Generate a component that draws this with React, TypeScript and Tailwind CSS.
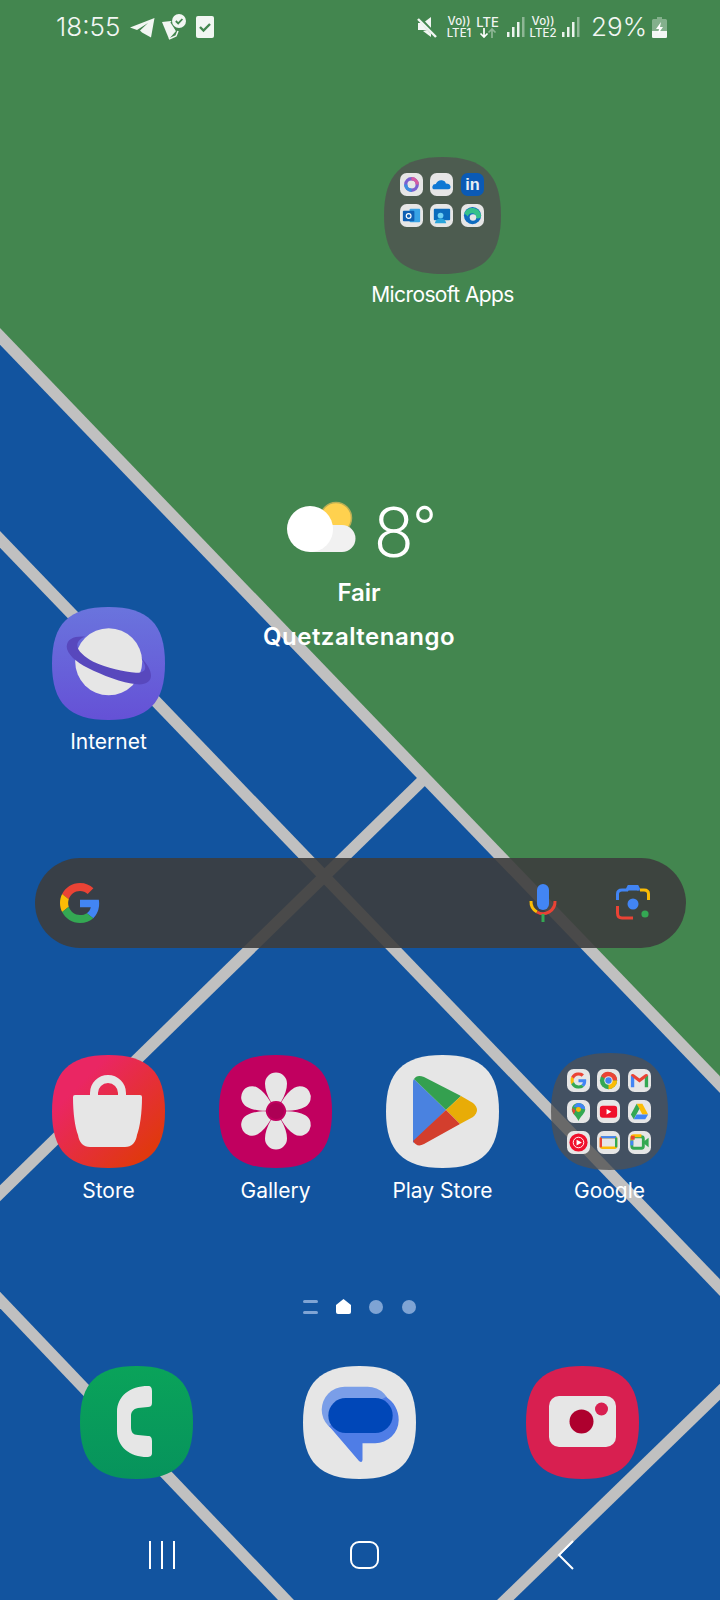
import type { ReactNode } from 'react';

const SQUIRCLE = 'M50 0C85 0 100 15 100 50C100 85 85 100 50 100C15 100 0 85 0 50C0 15 15 0 50 0Z';
const PETAL = 'M52 47C48 40 46 34 46 28.5A11 11 0 0 1 68 28.5C68 34 66 40 62 47Q57 45 52 47Z';

function Wallpaper() {
  return (
    <svg className="absolute inset-0" width="720" height="1600" viewBox="0 0 720 1600">
      <rect width="720" height="1600" fill="#12549f" />
      <polygon points="0,0 720,0 720,1085 0,336" fill="#43864f" />
      <g stroke="#c0c0c0" strokeWidth="11.5" fill="none">
        <line x1="-10" y1="326" x2="730" y2="1095" />
        <line x1="-10" y1="529" x2="730" y2="1298" />
        <line x1="-10" y1="1289.5" x2="300" y2="1614.7" />
        <line x1="425" y1="778" x2="-10" y2="1203" />
        <line x1="730" y1="1382" x2="495" y2="1610" />
      </g>
    </svg>
  );
}

function AppIcon({ bg, children }: { bg: string; children: ReactNode }) {
  return (
    <svg width="113" height="113" viewBox="0 0 113 113">
      <defs>
        <linearGradient id="storeBg" x1="0" y1="0" x2="1" y2="1">
          <stop offset="0.25" stopColor="#ea2663" />
          <stop offset="0.85" stopColor="#e0380f" />
        </linearGradient>
        <linearGradient id="netBg" x1="0" y1="0" x2="0" y2="1">
          <stop offset="0" stopColor="#6a74dd" />
          <stop offset="1" stopColor="#6551d6" />
        </linearGradient>
        <linearGradient id="phoneBg" x1="0" y1="0" x2="0" y2="1">
          <stop offset="0" stopColor="#0aa35a" />
          <stop offset="1" stopColor="#07935c" />
        </linearGradient>
      </defs>
      <path d={SQUIRCLE} transform="scale(1.13)" fill={bg} />
      {children}
    </svg>
  );
}

function GoogleG({ size }: { size: number }) {
  return (
    <svg width={size} height={size} viewBox="0 0 48 48">
      <path fill="#EA4335" d="M24 9.5c3.54 0 6.71 1.22 9.21 3.6l6.85-6.85C35.9 2.38 30.47 0 24 0 14.62 0 6.51 5.38 2.56 13.22l7.98 6.19C12.43 13.72 17.74 9.5 24 9.5z" />
      <path fill="#4285F4" d="M46.98 24.55c0-1.57-.15-3.09-.38-4.55H24v9.02h12.94c-.58 2.96-2.26 5.48-4.78 7.18l7.73 6c4.51-4.18 7.09-10.36 7.09-17.65z" />
      <path fill="#FBBC05" d="M10.53 28.59c-.48-1.45-.76-2.99-.76-4.59s.27-3.14.76-4.59l-7.98-6.19C.92 16.46 0 20.12 0 24c0 3.88.92 7.54 2.56 10.78l7.97-6.19z" />
      <path fill="#34A853" d="M24 48c6.48 0 11.93-2.13 15.89-5.81l-7.73-6c-2.15 1.45-4.92 2.3-8.16 2.3-6.26 0-11.57-4.22-13.47-9.91l-7.98 6.19C6.51 42.62 14.62 48 24 48z" />
    </svg>
  );
}

function Mini({ bg = '#e6e6e6', children }: { bg?: string; children: ReactNode }) {
  return (
    <svg width="23" height="23" viewBox="0 0 24 24">
      <rect width="24" height="24" rx="7" fill={bg} />
      {children}
    </svg>
  );
}

function Folder({ bg, children }: { bg: string; children: ReactNode }) {
  return (
    <div className="relative h-[117px] w-[117px]">
      <svg className="absolute inset-0" width="117" height="117" viewBox="0 0 100 100">
        <path d={SQUIRCLE} fill={bg} />
      </svg>
      <div className="relative grid grid-cols-[repeat(3,23px)] gap-x-[7.5px] gap-y-[8px] pl-[15.5px] pt-[16px]">{children}</div>
    </div>
  );
}

function Cell({ label, children, className = '', labelClass = 'mt-[7px]' }: { label?: string; children: ReactNode; className?: string; labelClass?: string }) {
  return (
    <div className={`flex flex-col items-center ${className}`}>
      <div className="flex h-[117px] w-[117px] items-center justify-center">{children}</div>
      {label && <div className={`text-[21px] leading-[28px] whitespace-nowrap text-white ${labelClass}`}>{label}</div>}
    </div>
  );
}

function Signal() {
  return (
    <svg width="18" height="21" viewBox="0 0 18 21">
      <rect x="0" y="15" width="2.5" height="5" fill="#fff" fillOpacity="0.9" />
      <rect x="5" y="10" width="2.5" height="10" fill="#fff" fillOpacity="0.9" />
      <rect x="10" y="5" width="2.5" height="15" fill="#fff" fillOpacity="0.9" />
      <rect x="15" y="0" width="2.5" height="20" fill="#fff" fillOpacity="0.4" />
    </svg>
  );
}

function VoLte({ line }: { line: string }) {
  return (
    <div className="flex w-[26px] flex-col items-center text-[11.5px] leading-[10.5px] font-medium text-[#f1f5f2]">
      <span>Vo))</span>
      <span className="mt-[1px]">{line}</span>
    </div>
  );
}

function StatusBar() {
  return (
    <div className="flex h-[52px] items-start justify-between pt-[14px] pr-[53px] pl-[56px] text-[#f2f6f3]">
      <div className="flex items-center">
        <span className="text-[26px] leading-[26px] font-light">18:55</span>
        <svg className="ml-[10px]" width="25" height="21" viewBox="0 0 25 21">
          <path d="M0 10.5 24.5 1 21 20.5 12 15.5 10 13.5 18 6 7 13 0 10.5Z" fill="currentColor" />
        </svg>
        <svg className="ml-[6px]" width="26" height="26" viewBox="0 0 26 26">
          <path d="M1 8 10 7 15 17 8 25 Z" fill="currentColor" />
          <path d="M10 8 16 17" stroke="#43864f" strokeWidth="1.5" />
          <path d="M8 25 15 22 17 17" stroke="currentColor" strokeWidth="1.5" fill="none" />
          <circle cx="18" cy="7" r="7" fill="currentColor" />
          <path d="M14.8 7 17.2 9.4 21.4 5" stroke="#43864f" strokeWidth="1.8" fill="none" />
        </svg>
        <svg className="ml-[9px]" width="18" height="22" viewBox="0 0 18 22">
          <rect width="18" height="22" rx="2" fill="currentColor" />
          <path d="M4 11 7.5 14.5 14 8" stroke="#43864f" strokeWidth="2.4" fill="none" />
        </svg>
      </div>
      <div className="flex items-center">
        <svg width="21" height="21" viewBox="0 0 21 21">
          <path d="M1 6H6L14 0V13L1 13Z" fill="currentColor" />
          <path d="M14 12V20L6 14Z" fill="currentColor" />
          <path d="M2 1 20 20" stroke="#43864f" strokeWidth="4" />
          <path d="M1 2 19 20" stroke="currentColor" strokeWidth="2.4" />
        </svg>
        <div className="ml-[8px]"><VoLte line="LTE1" /></div>
        <div className="ml-[4px] flex w-[23px] flex-col items-center text-[#f1f5f2]">
          <span className="text-[13px] leading-[11px] font-medium">LTE</span>
          <svg width="18" height="10" viewBox="0 0 18 10">
            <path d="M5 0V9M1.5 5.5 5 9 8.5 5.5" stroke="#fff" strokeWidth="1.7" fill="none" />
            <path d="M13 10V1M9.5 4.5 13 1 16.5 4.5" stroke="#fff" strokeOpacity="0.4" strokeWidth="1.7" fill="none" />
          </svg>
        </div>
        <div className="ml-[8px]"><Signal /></div>
        <div className="ml-[5px]"><VoLte line="LTE2" /></div>
        <div className="ml-[6px]"><Signal /></div>
        <span className="ml-[11px] text-[26px] leading-[26px] font-light">29%</span>
        <svg className="ml-[5px]" width="15" height="21" viewBox="0 0 15 21">
          <path d="M5 0H10V2H13.5Q15 2 15 3.5V19.5Q15 21 13.5 21H1.5Q0 21 0 19.5V3.5Q0 2 1.5 2H5Z" fill="#fff" fillOpacity="0.35" />
          <path d="M0 14H15V19.5Q15 21 13.5 21H1.5Q0 21 0 19.5Z" fill="#fff" fillOpacity="0.9" />
          <path d="M9 5 4 12H7L6 17 11 10H8Z" fill="#fff" />
        </svg>
      </div>
    </div>
  );
}

function WeatherIcon() {
  return (
    <svg width="70" height="54" viewBox="0 0 70 54">
      <circle cx="49" cy="18" r="15.5" fill="#ffd14e" stroke="#b9ae55" strokeWidth="1.5" />
      <path d="M24 52V25H55A13.5 13.5 0 0 1 55 52Z" fill="#f1f1f1" />
      <path d="M23 52A23 23 0 1 1 23 6 23 23 0 0 1 46 29C46 42 36 52 23 52Z" fill="#fff" />
    </svg>
  );
}

function Weather() {
  return (
    <div className="col-span-4 col-start-1 row-start-1 mt-[191px] flex flex-col items-center self-start text-white">
      <div className="flex items-start pl-[5px]">
        <WeatherIcon />
        <span className="mt-[5px] ml-[17px] font-[Roboto,sans-serif] text-[70px] leading-[56px] font-light tracking-[-2px]">8°</span>
      </div>
      <div className="mt-[17px] text-[24px] leading-[30px] font-semibold">Fair</div>
      <div className="mt-[14px] text-[24px] leading-[30px] font-semibold tracking-[0.5px]">Quetzaltenango</div>
    </div>
  );
}

function SearchBar() {
  return (
    <div className="mt-[102px] ml-[35px] flex h-[90px] w-[651px] items-center rounded-[45px] bg-[rgba(61,61,61,0.9)] pr-[36px] pl-[25px]">
      <GoogleG size={40} />
      <svg className="ml-auto" width="28" height="38" viewBox="0 0 28 38">
        <rect x="8" y="0" width="12" height="26" rx="6" fill="#4285F4" />
        <path d="M2 17A12 12 0 0 0 8 28" stroke="#FBBC05" strokeWidth="3" fill="none" />
        <path d="M8 28A12 12 0 0 0 26 17" stroke="#EA4335" strokeWidth="3" fill="none" />
        <rect x="12.5" y="30" width="3" height="8" fill="#34A853" />
      </svg>
      <svg className="ml-[59px]" width="34" height="36" viewBox="0 0 34 36">
        <path d="M1.5 15V9Q1.5 5 6 5H11L13 1H21L23 5" fill="none" stroke="#4285F4" strokeWidth="3" />
        <path d="M10 5.5 13 1H21L24 5.5Z" fill="#4285F4" />
        <path d="M24 5H28Q32.5 5 32.5 9V15" fill="none" stroke="#FBBC05" strokeWidth="3" />
        <path d="M1.5 21V28Q1.5 33 6 33H17" fill="none" stroke="#EA4335" strokeWidth="3" />
        <circle cx="17" cy="19" r="5.5" fill="#4285F4" />
        <circle cx="29" cy="29" r="3.6" fill="#34A853" />
      </svg>
    </div>
  );
}

function PageDots() {
  return (
    <div className="mt-[94px] ml-[303px] flex h-[15px] items-center">
      <div className="flex h-[14px] w-[15px] flex-col justify-between">
        <div className="h-[3px] rounded-full bg-[#7fa4d4]" />
        <div className="h-[3px] rounded-full bg-[#7fa4d4]" />
      </div>
      <svg className="ml-[18px]" width="15" height="15" viewBox="0 0 15 15">
        <path d="M7.5 0 15 6V13Q15 15 13 15H2Q0 15 0 13V6Z" fill="#fff" />
      </svg>
      <div className="ml-[18px] h-[14px] w-[14px] rounded-full bg-[#7fa4d4]" />
      <div className="ml-[19px] h-[14px] w-[14px] rounded-full bg-[#7fa4d4]" />
    </div>
  );
}

function NavBar() {
  return (
    <div className="mt-[60px] grid h-[28px] grid-cols-[repeat(3,202px)] pl-[61px]">
      <div className="flex justify-center gap-[10px]">
        <div className="h-[28px] w-[2px] bg-white" />
        <div className="h-[28px] w-[2px] bg-white" />
        <div className="h-[28px] w-[2px] bg-white" />
      </div>
      <div className="flex justify-center">
        <div className="h-[28px] w-[29px] rounded-[9px] border-2 border-white" />
      </div>
      <div className="flex justify-center">
        <svg width="18" height="30" viewBox="0 0 18 30" className="-mt-[1px]">
          <path d="M16 1 2 15 16 29" stroke="#fff" strokeWidth="2" fill="none" />
        </svg>
      </div>
    </div>
  );
}

export default function App() {
  return (
    <div className="relative h-[1600px] w-[720px] overflow-hidden font-[Inter,sans-serif]">
      <Wallpaper />
      <div className="relative flex flex-col">
        <StatusBar />

        <div className="mt-[105px] grid grid-cols-[repeat(4,167px)] pl-[25px]">
          <Cell label="Microsoft Apps" className="col-start-3" labelClass="mt-[7px] tracking-[-0.6px]">
            <Folder bg="rgba(81,81,81,0.78)">
              <Mini>
                <circle cx="12" cy="12" r="6" fill="none" stroke="#7a5fd0" strokeWidth="3.4" />
                <path d="M12 6A6 6 0 0 1 18 12" fill="none" stroke="#d65aa0" strokeWidth="3.4" />
                <path d="M6 12A6 6 0 0 0 12 18" fill="none" stroke="#3a8fe0" strokeWidth="3.4" />
              </Mini>
              <Mini>
                <path d="M5 17Q2 17 2.5 14 3 11.5 6 11.5 8 7 12.5 7.5 16 8 16.5 11 21 11 21.5 14.5 21.5 17 19 17Z" fill="#0f78d4" />
              </Mini>
              <Mini bg="#0a5ab5">
                <text x="12" y="18" textAnchor="middle" fontSize="17" fontWeight="700" fill="#e8eef5" fontFamily="Liberation Sans">in</text>
              </Mini>
              <Mini>
                <rect x="10" y="5" width="11" height="14" rx="1" fill="#38a3e6" />
                <rect x="3" y="7" width="12" height="11" rx="1" fill="#0f5fb4" />
                <circle cx="9" cy="12.5" r="2.5" fill="none" stroke="#fff" strokeWidth="1.2" />
              </Mini>
              <Mini>
                <rect x="4" y="5" width="17" height="12" rx="1" fill="#0b6cbd" />
                <circle cx="11" cy="12" r="3" fill="#6fd0f2" />
                <path d="M5 20Q6 15 11 15 16 15 17 20Z" fill="#2aa5dc" />
              </Mini>
              <Mini>
                <circle cx="12" cy="12" r="9" fill="#0f6cc0" />
                <path d="M3.5 10C6 2 19 2 21 12 21 15 17 16 15 14 17 10 9 7 7 13 5.5 11 4 11 3.5 10Z" fill="#35c18b" />
                <circle cx="12.5" cy="14" r="3.4" fill="#e6e6e6" />
              </Mini>
            </Folder>
          </Cell>
        </div>

        <div className="grid grid-cols-[repeat(4,167px)] pl-[25px]">
          <Weather />
          <Cell label="Internet" className="col-start-1 row-start-1 mt-[296px]" labelClass="mt-[6px]">
            <AppIcon bg="url(#netBg)">
              <circle cx="56.7" cy="54.7" r="33.5" fill="#e6e6e6" />
              <path d="M33 29.7C22 29 15 32 14.7 39.7C15 47 24 55 36 61C50 68 70 76 85 77.3C94 78 99 74 99 68.7C99 63 95 57 89.7 51.3C92 56 94 59 93 62C92 65 88 66 84 65.7C72 65 55 61 41.3 54.7C33 50 25 44 25.3 38C25.5 34 29 31 33 29.7Z" fill="#5848bd" />
            </AppIcon>
          </Cell>
        </div>

        <SearchBar />

        <div className="mt-[105px] grid grid-cols-[repeat(4,167px)] pl-[25px]">
          <Cell label="Store">
            <AppIcon bg="url(#storeBg)">
              <path d="M42 42V38A14 14 0 0 1 70 38V42" fill="none" stroke="#e6e6e6" strokeWidth="8" />
              <path d="M21 42Q21 40 23 40H88Q90 40 90 42C90 58 88 72 85 80Q83 92 73 92H38Q28 92 26 80C23 72 21 58 21 42Z" fill="#e6e6e6" />
            </AppIcon>
          </Cell>
          <Cell label="Gallery">
            <AppIcon bg="#c1005f">
              <path d={PETAL} fill="#e6e6e6" />
              <path d={PETAL} fill="#e6e6e6" transform="rotate(60 57 56)" />
              <path d={PETAL} fill="#e6e6e6" transform="rotate(120 57 56)" />
              <path d={PETAL} fill="#e6e6e6" transform="rotate(180 57 56)" />
              <path d={PETAL} fill="#e6e6e6" transform="rotate(240 57 56)" />
              <path d={PETAL} fill="#e6e6e6" transform="rotate(300 57 56)" />
              <circle cx="57" cy="56" r="8" fill="#ad0055" />
            </AppIcon>
          </Cell>
          <Cell label="Play Store">
            <AppIcon bg="#e6e6e6">
              <path d="M28 24 60 55 27 88Q27 86 27 84V27Q27 25 28 24Z" fill="#4a82e0" />
              <path d="M28 24Q31 19 38 22L75 41 60 55Z" fill="#34a04f" />
              <path d="M75 41 87 48Q95 55 87 62L74 69 60 55Z" fill="#e8ac07" />
              <path d="M60 55 74 69 38 89Q31 93 27 86Z" fill="#d33e2d" />
            </AppIcon>
          </Cell>
          <Cell label="Google">
            <Folder bg="rgba(81,81,81,0.78)">
              <Mini>
                <svg x="3.5" y="3.5" width="17" height="17" viewBox="0 0 48 48">
                  <path fill="#EA4335" d="M24 9.5c3.54 0 6.71 1.22 9.21 3.6l6.85-6.85C35.9 2.38 30.47 0 24 0 14.62 0 6.51 5.38 2.56 13.22l7.98 6.19C12.43 13.72 17.74 9.5 24 9.5z" />
                  <path fill="#4285F4" d="M46.98 24.55c0-1.57-.15-3.09-.38-4.55H24v9.02h12.94c-.58 2.96-2.26 5.48-4.78 7.18l7.73 6c4.51-4.18 7.09-10.36 7.09-17.65z" />
                  <path fill="#FBBC05" d="M10.53 28.59c-.48-1.45-.76-2.99-.76-4.59s.27-3.14.76-4.59l-7.98-6.19C.92 16.46 0 20.12 0 24c0 3.88.92 7.54 2.56 10.78l7.97-6.19z" />
                  <path fill="#34A853" d="M24 48c6.48 0 11.93-2.13 15.89-5.81l-7.73-6c-2.15 1.45-4.92 2.3-8.16 2.3-6.26 0-11.57-4.22-13.47-9.91l-7.98 6.19C6.51 42.62 14.62 48 24 48z" />
                </svg>
              </Mini>
              <Mini>
                <circle cx="12" cy="12" r="9" fill="#34a853" />
                <path d="M4.2 7.5A9 9 0 0 1 21 12H12Z" fill="#ea4335" />
                <path d="M21 12A9 9 0 0 1 12 21L12 12Z" fill="#fbbc05" />
                <circle cx="12" cy="12" r="4.4" fill="#e6e6e6" />
                <circle cx="12" cy="12" r="3.3" fill="#4285f4" />
              </Mini>
              <Mini>
                <path d="M3 19V6.5L6.5 8V19Z" fill="#4285f4" />
                <path d="M17.5 19V8L21 6.5V19Z" fill="#34a853" />
                <path d="M3 6.5Q4 4.5 6 5.5L12 10 18 5.5Q20 4.5 21 6.5L17.5 10 12 14 6.5 10Z" fill="#ea4335" />
              </Mini>
              <Mini>
                <path d="M12 3A7 7 0 0 1 19 10C19 14 14 17 12 22 10 17 5 14 5 10A7 7 0 0 1 12 3Z" fill="#34a853" />
                <path d="M12 3A7 7 0 0 1 19 10L7 7Q9 3 12 3Z" fill="#4285f4" />
                <path d="M5.5 8 9 11 7 15Q5 12 5.5 8Z" fill="#ea4335" />
                <circle cx="12" cy="10" r="2.6" fill="#fbbc05" />
              </Mini>
              <Mini>
                <rect x="3" y="6" width="18" height="12.5" rx="3" fill="#f0102c" />
                <path d="M10 9.5 15 12.2 10 15Z" fill="#fff" />
              </Mini>
              <Mini>
                <path d="M9 4H15L21 15H15Z" fill="#fbbc05" />
                <path d="M9 4 3 15 6 20 12 9Z" fill="#34a853" />
                <path d="M6 20H18L21 15H9Z" fill="#4285f4" />
              </Mini>
              <Mini>
                <circle cx="12" cy="12" r="9.5" fill="#f0102c" />
                <circle cx="12" cy="12" r="5.5" fill="none" stroke="#fff" strokeWidth="1" />
                <path d="M10 9 15.5 12 10 15Z" fill="#fff" />
              </Mini>
              <Mini>
                <rect x="4" y="6.5" width="16" height="11" rx="1.5" fill="none" stroke="#fbbc05" strokeWidth="2.4" />
                <path d="M4 6.5H20" stroke="#4285f4" strokeWidth="2.4" />
                <path d="M20 7V17" stroke="#34a853" strokeWidth="2.4" />
                <path d="M4 7V17" stroke="#ea4335" strokeWidth="2.4" />
              </Mini>
              <Mini>
                <rect x="4" y="6" width="12" height="12" rx="2" fill="none" stroke="#34a853" strokeWidth="3" />
                <path d="M4 10V7Q4 5 6 5H14" fill="none" stroke="#fbbc05" strokeWidth="3" />
                <path d="M4 10V15" stroke="#4285f4" strokeWidth="3" />
                <path d="M16.5 11 21.5 7V17L16.5 13Z" fill="#34a853" />
                <path d="M3 5H7V9H3Z" fill="#ea4335" />
              </Mini>
            </Folder>
          </Cell>
        </div>

        <PageDots />

        <div className="mt-[50px] grid grid-cols-[repeat(3,223px)] pl-[25px]">
          <Cell>
            <AppIcon bg="url(#phoneBg)">
              <path d="M68 20C71 20 72 22 72 25V37C72 40 70 41 68 41L58 42C53 43 51 46 51 50V61C51 66 53 69 58 69L68 70C71 70 72 72 72 75V87C72 90 70 91 67 91C50 91 37 81 37 65V46C37 30 50 20 68 20Z" fill="#e6e6e6" />
            </AppIcon>
          </Cell>
          <Cell>
            <AppIcon bg="#e6e6e6">
              <rect x="18.7" y="20.7" width="69" height="46" rx="23" fill="#7a9ee8" />
              <path d="M26 60 56 95Q59 97.5 59.5 94V77.3H72A23.5 23.5 0 0 0 95.7 54C95.7 44 91 36 83 31L26 60Z" fill="#4f7de6" />
              <rect x="25.3" y="32" width="64.4" height="35" rx="17.5" fill="#0047b8" />
            </AppIcon>
          </Cell>
          <Cell>
            <AppIcon bg="#d81f50">
              <rect x="23" y="30" width="67" height="51" rx="10" fill="#e6e6e6" />
              <circle cx="55.5" cy="55.5" r="12" fill="#ae002e" />
              <circle cx="75.5" cy="43" r="6.5" fill="#d81f50" />
            </AppIcon>
          </Cell>
        </div>

        <NavBar />
      </div>
    </div>
  );
}
